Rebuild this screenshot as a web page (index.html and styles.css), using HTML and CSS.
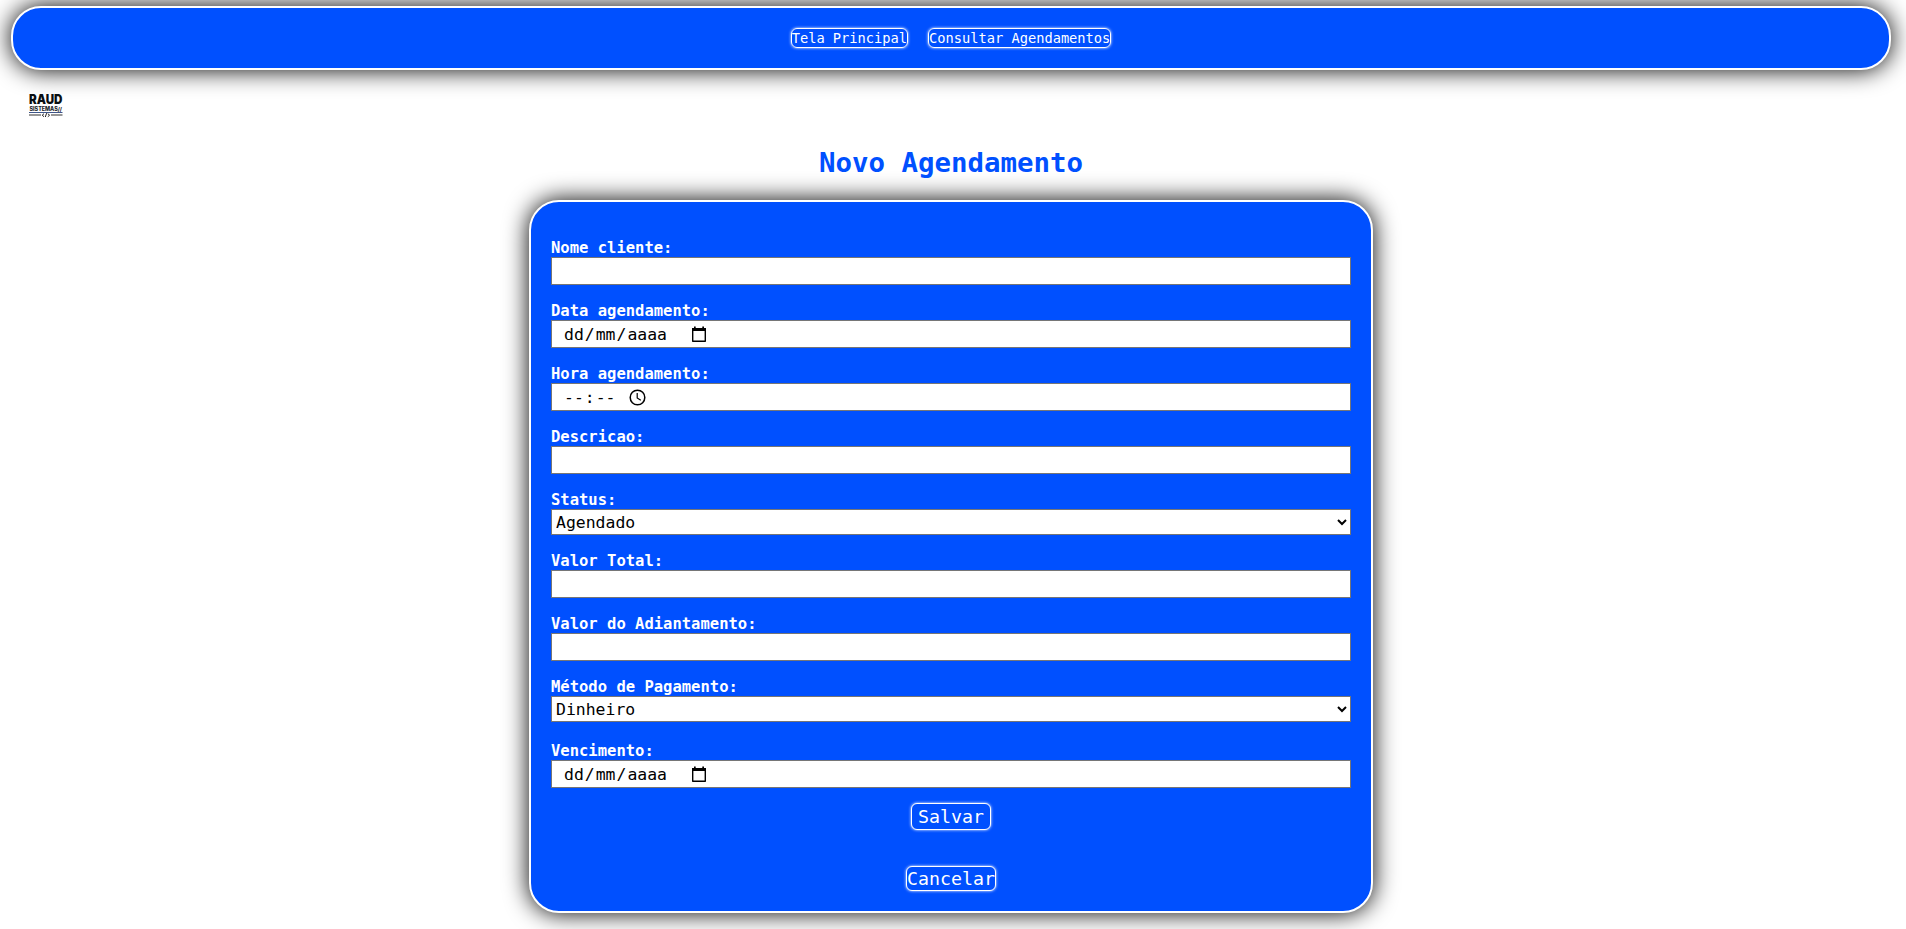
FILE: index.html
```html
<!DOCTYPE html>
<html lang="pt-BR">
<head>
<meta charset="utf-8">
<title>Novo Agendamento</title>
<link rel="stylesheet" href="styles.css">
</head>
<body>
<nav class="menu">
  <a class="menu-link">Tela Principal</a>
  <a class="menu-link">Consultar Agendamentos</a>
</nav>
<header class="brand">
  <svg class="logo" width="36" height="26" viewBox="0 0 36 26">
    <text class="logo-name" x="1" y="11" textLength="33.5" lengthAdjust="spacingAndGlyphs">RAUD</text>
    <text class="logo-sub" x="1.5" y="18" textLength="32.5" lengthAdjust="spacingAndGlyphs">SISTEMAS//</text>
    <path d="M1 19.500h33.500" stroke="#3f5688" stroke-width="1"/>
    <path d="M1 22h12M23 22h11.500" stroke="#777" stroke-width="1.500"/>
    <path d="M16 20.700l-1.800 1.500 1.800 1.500M18.600 20.200l-1.300 3.800M19.800 20.700l1.800 1.500-1.800 1.500" fill="none" stroke="#222" stroke-width="1"/>
  </svg>
</header>
<h1 class="title">Novo Agendamento</h1>
<form class="form">
  <div class="field"><label class="label">Nome cliente:</label><input class="control" type="text"></div>
  <div class="field"><label class="label">Data agendamento:</label>
    <div class="control picker"><span>dd</span><span class="sep">/</span><span>mm</span><span class="sep">/</span><span>aaaa</span>
      <svg class="calendar" width="16" height="17" viewBox="0 0 16 17"><path d="M1.700 2.800h12.600v12.400H1.700z" fill="none" stroke="#000" stroke-width="1.400" stroke-linejoin="round"/><path d="M1 2h14v3H1zM3 0.500h1.700v2H3zM11.300 0.500H13v2h-1.700z"/></svg>
    </div></div>
  <div class="field"><label class="label">Hora agendamento:</label>
    <div class="control picker"><span>--</span><span class="sep">:</span><span>--</span>
      <svg class="clock" width="17" height="17" viewBox="0 0 17 17" fill="none" stroke="#000"><circle cx="8.500" cy="8.500" r="7.300" stroke-width="1.500"/><path d="M8.200 4v5l3.600 2.300" stroke-width="1.200"/></svg>
    </div></div>
  <div class="field"><label class="label">Descricao:</label><input class="control" type="text"></div>
  <div class="field"><label class="label">Status:</label><select class="control select"><option>Agendado</option></select></div>
  <div class="field"><label class="label">Valor Total:</label><input class="control" type="text"></div>
  <div class="field"><label class="label">Valor do Adiantamento:</label><input class="control" type="text"></div>
  <div class="field method"><label class="label">Método de Pagamento:</label><select class="control select"><option>Dinheiro</option></select></div>
  <div class="field"><label class="label">Vencimento:</label>
    <div class="control picker"><span>dd</span><span class="sep">/</span><span>mm</span><span class="sep">/</span><span>aaaa</span>
      <svg class="calendar" width="16" height="17" viewBox="0 0 16 17"><path d="M1.700 2.800h12.600v12.400H1.700z" fill="none" stroke="#000" stroke-width="1.400" stroke-linejoin="round"/><path d="M1 2h14v3H1zM3 0.500h1.700v2H3zM11.300 0.500H13v2h-1.700z"/></svg>
    </div></div>
  <button class="button save" type="button">Salvar</button>
  <a class="button cancel">Cancelar</a>
</form>
</body>
</html>
```
FILE: styles.css
```css
* { box-sizing: border-box; }
body {
  margin: 0;
  height: 929px;
  overflow: hidden;
  background: #fff;
  font-family: "DejaVu Sans Mono", monospace;
}
.menu {
  display: flex;
  justify-content: center;
  gap: 20px;
  width: 1880px;
  height: 64px;
  margin: 6px 0 0 11px;
  padding-top: 20px;
  background: #0050ff;
  border: 2px solid #fff;
  border-radius: 30px;
  box-shadow: 0 0 25px #000;
}
.menu-link {
  height: 20px;
  border: 1px solid #fff;
  border-radius: 6px;
  box-shadow: 0 0 3px #fff;
  color: #fff;
  font-size: 13.7px;
  line-height: 19px;
}
.brand { height: 76px; padding: 23px 0 0 28px; }
.logo { display: block; overflow: visible; }
.logo-name { font: 900 13px Inter, sans-serif; fill: #0b0f12; }
.logo-sub { font: 800 5.600px Inter, sans-serif; fill: #20242a; }
.title {
  width: 1902px;
  height: 54px;
  margin: 0;
  color: #0050ff;
  font-size: 27.400px;
  line-height: 34px;
  text-align: center;
}
.form {
  display: flex;
  flex-direction: column;
  width: 844px;
  height: 713px;
  margin-left: 529px;
  padding: 35px 20px 20px;
  background: #0050ff;
  border: 2px solid #fff;
  border-radius: 30px;
  box-shadow: 0 0 25px #000;
}
.field { margin-bottom: 15px; }
.method { margin-bottom: 18px; }
.label {
  display: block;
  height: 20px;
  color: #fff;
  font-size: 15.530px;
  font-weight: bold;
  line-height: 23px;
}
.control {
  display: block;
  width: 800px;
  height: 28px;
  margin: 0;
  background: #fff;
  border: 1px solid #767676;
  border-radius: 0;
  color: #000;
  font: 16.440px "DejaVu Sans Mono", monospace;
}
.picker {
  display: flex;
  align-items: center;
  padding-left: 12px;
}
.sep { padding: 0 1px; }
.calendar { margin-left: 24px; }
.clock { margin-left: 13px; }
.select { height: 26px; padding: 0; }
.button {
  align-self: center;
  border: 1px solid #fff;
  border-radius: 6px;
  box-shadow: 0 0 3px #fff;
  background: #0050ff;
  color: #fff;
  font: 18.270px/24px "DejaVu Sans Mono", monospace;
}
.save { height: 27px; padding: 0 6px; }
.cancel { height: 25px; margin-top: 36px; }
```
